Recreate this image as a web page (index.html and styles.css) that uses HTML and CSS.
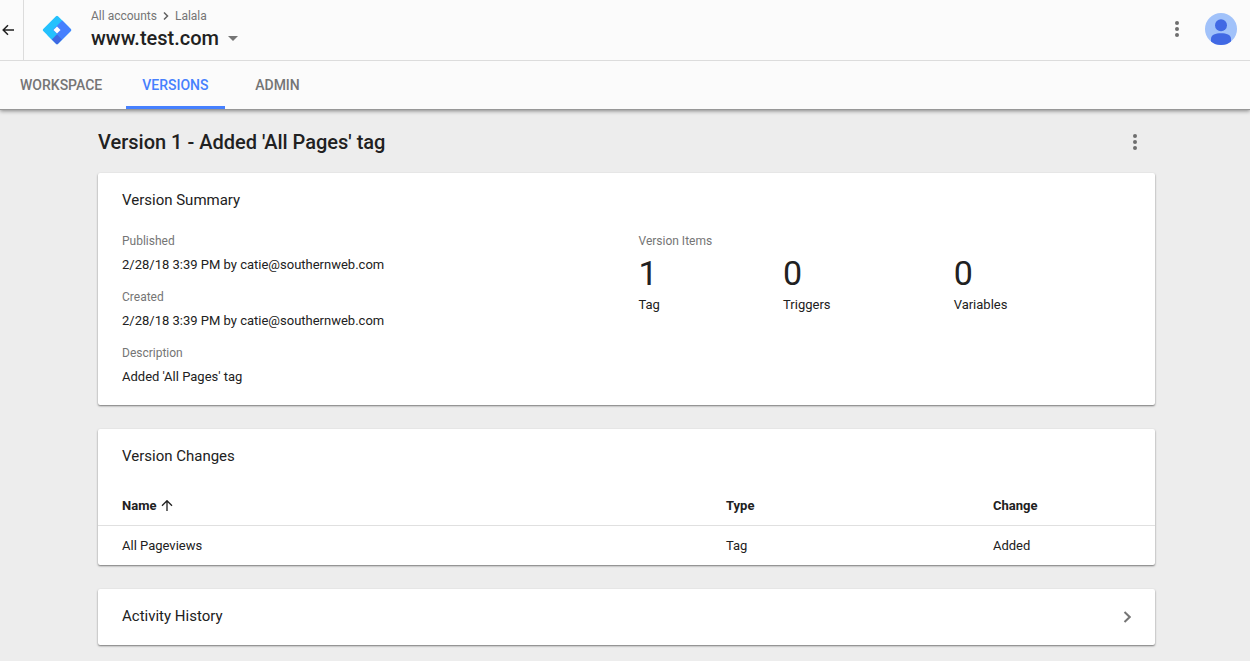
FILE: index.html
```html
<!DOCTYPE html>
<html lang="en">
<head>
<meta charset="utf-8">
<title>Version 1 - www.test.com</title>
<meta name="viewport" content="width=device-width, initial-scale=1">
<link rel="stylesheet" href="styles.css">
</head>
<body>
<header class="header">
  <div class="topbar">
    <button class="icon-button back" aria-label="Back">
      <svg width="14" height="14" viewBox="0 0 14 14" fill="none" stroke="#212121" stroke-width="1.5"><path d="M13 7H2.5M7 2.2L2.2 7L7 11.8"/></svg>
    </button>
    <svg class="logo" width="30" height="30" viewBox="0 0 30 30" aria-hidden="true">
      <defs><clipPath id="logo-shape"><rect x="-10.5" y="-10.5" width="21" height="21" rx="1.5"/></clipPath></defs>
      <g transform="translate(15 15) rotate(45)" clip-path="url(#logo-shape)">
        <rect x="-11" y="-11" width="22" height="22" fill="#24c1fd"/>
        <rect x="-3" y="-11" width="14" height="14" fill="#4680fe"/>
        <rect x="-3" y="3" width="6" height="8" fill="#24c1fd"/>
        <rect x="3" y="3" width="8" height="8" fill="#3f68e3"/>
        <rect x="-2.500" y="-2.500" width="5" height="5" fill="#fff"/>
      </g>
    </svg>
    <div class="container-info">
      <nav class="breadcrumb" aria-label="Breadcrumb">
        <a href="#">All accounts</a>
        <svg width="6" height="8" viewBox="0 0 6 8" fill="none" stroke="#616161" stroke-width="1.500"><path d="M1 .5L4.500 4L1 7.500"/></svg>
        <a href="#">Lalala</a>
      </nav>
      <button class="container-name">www.test.com
        <svg width="10" height="5" viewBox="0 0 10 5"><path d="M0 0H10L5 5Z" fill="#757575"/></svg>
      </button>
    </div>
    <div class="actions">
      <button class="icon-button more" aria-label="More options">
        <svg width="4" height="16" viewBox="0 0 4 16" fill="#6e6e6e"><circle cx="2" cy="2" r="2"/><circle cx="2" cy="8" r="2"/><circle cx="2" cy="14" r="2"/></svg>
      </button>
      <button class="icon-button avatar" aria-label="Account">
        <svg width="32" height="32" viewBox="0 0 32 32"><circle cx="16" cy="16" r="16" fill="#a1c2fa"/><circle cx="16" cy="12.200" r="6" fill="#4169e4"/><path d="M6 26C6 21.500 10.500 20.200 16 20.200S26 21.500 26 26V28.500Q22 32 16 32T6 28.500Z" fill="#4169e4"/></svg>
      </button>
    </div>
  </div>
  <nav class="tabs" aria-label="Sections">
    <a class="tab" href="#">WORKSPACE</a>
    <a class="tab tab-active" href="#" aria-current="page">VERSIONS</a>
    <a class="tab" href="#">ADMIN</a>
  </nav>
</header>
<main class="content">
  <div class="page-heading">
    <h1 class="page-title">Version 1 - Added 'All Pages' tag</h1>
    <button class="icon-button page-more" aria-label="Version actions">
      <svg width="4" height="16" viewBox="0 0 4 16" fill="#6e6e6e"><circle cx="2" cy="2" r="2"/><circle cx="2" cy="8" r="2"/><circle cx="2" cy="14" r="2"/></svg>
    </button>
  </div>
  <section class="card summary">
    <h2 class="card-title">Version Summary</h2>
    <div class="summary-grid">
      <dl class="details">
        <div><dt class="label">Published</dt><dd class="value">2/28/18 3:39 PM by catie@southernweb.com</dd></div>
        <div><dt class="label">Created</dt><dd class="value">2/28/18 3:39 PM by catie@southernweb.com</dd></div>
        <div><dt class="label">Description</dt><dd class="value">Added 'All Pages' tag</dd></div>
      </dl>
      <div>
        <h3 class="label">Version Items</h3>
        <ul class="items">
          <li class="item"><span class="count">1</span><span>Tag</span></li>
          <li class="item"><span class="count">0</span><span>Triggers</span></li>
          <li class="item"><span class="count">0</span><span>Variables</span></li>
        </ul>
      </div>
    </div>
  </section>
  <section class="card changes">
    <h2 class="card-title">Version Changes</h2>
    <table class="table">
      <thead>
        <tr>
          <th class="col-name" aria-sort="ascending"><button class="sort">Name
            <svg width="12" height="12" viewBox="0 0 12 12" fill="none" stroke="#212121" stroke-width="1.300"><path d="M6 11V1M1 5.700L6 .7L11 5.700"/></svg></button></th>
          <th class="col-type">Type</th>
          <th>Change</th>
        </tr>
      </thead>
      <tbody>
        <tr><td>All Pageviews</td><td>Tag</td><td>Added</td></tr>
      </tbody>
    </table>
  </section>
  <section class="card">
    <h2 class="card-title"><button class="history">Activity History
      <svg width="8" height="14" viewBox="0 0 8 14" fill="none" stroke="#757575" stroke-width="2"><path d="M1.500 3L6.700 8L1.500 13"/></svg></button></h2>
  </section>
</main>
</body>
</html>
```
FILE: styles.css
```css
* {
  box-sizing: border-box;
}

body {
  margin: 0;
  background: #ededed;
  color: #212121;
  font: 13px/16px Roboto, "Liberation Sans", sans-serif;
}

h1, h2, h3, dl, dd, ul {
  margin: 0;
  padding: 0;
  font-weight: 400;
}

ul {
  list-style: none;
}

a {
  color: inherit;
  text-decoration: none;
}

button {
  padding: 0;
  border: 0;
  background: none;
  color: inherit;
  font: inherit;
  text-align: left;
  cursor: pointer;
}

svg {
  display: block;
  flex: none;
}

.header {
  background: #fbfbfb;
  border-bottom: 1px solid #979797;
  box-shadow: 0 1px 4px rgba(0, 0, 0, 0.45);
}

.topbar {
  display: flex;
  align-items: center;
  height: 61px;
  padding-right: 13px;
  border-bottom: 1px solid #dcdcdc;
}

.icon-button {
  display: flex;
  align-items: center;
  justify-content: center;
}

.back {
  align-self: stretch;
  width: 24px;
  padding-right: 8px;
  border-right: 1px solid #dcdcdc;
}

.logo {
  margin: 0 19px 0 18px;
}

.container-info {
  flex: 1;
  padding-bottom: 2px;
}

.breadcrumb {
  display: flex;
  align-items: center;
  gap: 6px;
  color: #757575;
  font-size: 12px;
}

.container-name {
  display: flex;
  align-items: center;
  gap: 9px;
  margin-top: 2px;
  font-size: 20px;
  font-weight: 500;
  line-height: 24px;
}

.actions {
  display: flex;
  gap: 16px;
  padding-bottom: 2px;
}

.more {
  width: 24px;
  height: 32px;
}

.avatar {
  border-radius: 50%;
}

.tabs {
  display: flex;
  gap: 8px;
  padding-left: 4px;
}

.tab {
  min-width: 90px;
  padding: 16px 16px 13px;
  border-bottom: 3px solid transparent;
  color: #757575;
  font-size: 14px;
  font-weight: 500;
  text-align: center;
}

.tab-active {
  border-color: #4680fe;
  color: #4680fe;
}

.content {
  padding: 0 95px 16px 98px;
}

.page-heading {
  display: flex;
  align-items: center;
  justify-content: space-between;
  height: 63px;
}

.page-title {
  font-size: 20px;
  font-weight: 500;
  line-height: 24px;
}

.page-more {
  width: 24px;
  height: 32px;
  margin-right: 8px;
}

.card {
  margin-bottom: 24px;
  border-radius: 2px;
  background: #fff;
  box-shadow: 0 1px 2px rgba(0, 0, 0, 0.5);
}

.card-title {
  font-size: 15px;
  line-height: 22px;
}

.summary {
  padding: 16px 24px 20px;
}

.summary-grid {
  display: grid;
  grid-template-columns: 1fr 1fr;
  gap: 24px;
  margin-top: 22px;
}

.details {
  display: grid;
  gap: 16px;
}

.label {
  color: #757575;
  font-size: 12px;
}

.value {
  margin-top: 8px;
}

.items {
  display: flex;
  gap: 25%;
  margin-top: 4px;
}

.item {
  display: grid;
  gap: 4px;
}

.count {
  font-size: 34px;
  line-height: 40px;
}

.changes .card-title {
  padding: 16px 24px 19px;
}

.table {
  width: 100%;
  border-collapse: separate;
  border-spacing: 0;
  table-layout: fixed;
}

th, td {
  padding: 12px 24px 11px;
  text-align: left;
}

th {
  border-bottom: 1px solid #e0e0e0;
  font-weight: 700;
}

.col-name {
  width: 57.14%;
}

.col-type {
  width: 25.26%;
}

.sort {
  display: flex;
  align-items: center;
  gap: 5px;
}

.history {
  display: flex;
  align-items: center;
  justify-content: space-between;
  width: 100%;
  padding: 16px 24px 18px;
}
```
